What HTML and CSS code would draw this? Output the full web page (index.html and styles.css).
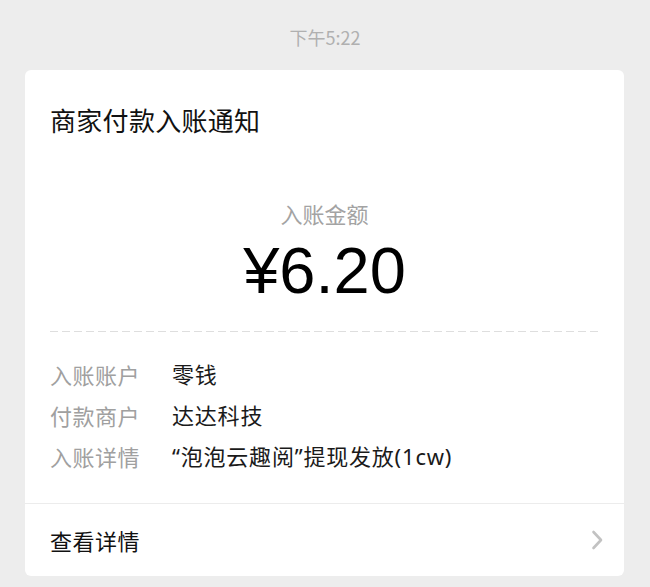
FILE: index.html
```html
<!DOCTYPE html>
<html lang="zh-CN">
<head>
<meta charset="utf-8">
<title>商家付款入账通知</title>
<link rel="stylesheet" href="styles.css">
</head>
<body>
<div class="time">下午5:22</div>
<div class="card">
  <div class="body">
    <div class="title">商家付款入账通知</div>
    <div class="amount-label">入账金额</div>
    <div class="amount">¥6.20</div>
    <div class="dash"></div>
    <div class="rows">
      <div class="row"><span class="label">入账账户</span><span class="value">零钱</span></div>
      <div class="row"><span class="label">付款商户</span><span class="value">达达科技</span></div>
      <div class="row"><span class="label">入账详情</span><span class="value">“泡泡云趣阅”提现发放(1cw)</span></div>
    </div>
  </div>
  <div class="footer">
    <span class="footer-text">查看详情</span>
    <svg class="chev" width="12" height="20" viewBox="0 0 12 20"><path d="M2.5 2 L10 10 L2.5 18" fill="none" stroke="#c2c2c2" stroke-width="2.6" stroke-linecap="round" stroke-linejoin="round"/></svg>
  </div>
</div>
</body>
</html>
```

FILE: styles.css
```css
* { box-sizing: border-box; }
html, body { margin: 0; padding: 0; }
body {
  background: #ededed;
  font-family: "Noto Sans CJK SC", "Noto Sans", sans-serif;
  width: 650px;
  height: 587px;
  overflow: hidden;
}
.time {
  height: 70px;
  padding-top: 24px;
  line-height: 26px;
  text-align: center;
  font-size: 18px;
  color: #b0b0b0;
}
.card {
  margin: 0 26px 0 25px;
  background: #fff;
  border-radius: 6px;
}
.body {
  padding: 32px 25px 0 25px;
}
.title {
  font-size: 26px;
  line-height: 36px;
  color: #111;
  letter-spacing: 0.3px;
}
.amount-label {
  margin-top: 60px;
  text-align: center;
  font-size: 22px;
  line-height: 30px;
  color: #a3a3a3;
}
.amount {
  margin-top: 8px;
  text-align: center;
  font-family: "Liberation Sans", Arial, sans-serif;
  font-size: 65px;
  line-height: 70px;
  color: #000;
}
.dash {
  margin-top: 25px;
  height: 1px;
  background: repeating-linear-gradient(to right, #dedede 0 8px, transparent 8px 12px);
}
.rows {
  padding: 22px 0 26px 0;
}
.row {
  display: flex;
  font-size: 22px;
  line-height: 41px;
}
.label {
  width: 122px;
  color: #a0a0a0;
  letter-spacing: 0.5px;
}
.value {
  color: #1a1a1a;
  font-family: "Noto Sans", "Noto Sans CJK SC", sans-serif;
  letter-spacing: 0.8px;
}
.footer {
  border-top: 1px solid #ececec;
  height: 73px;
  padding: 0 21px 0 25px;
  display: flex;
  align-items: center;
  justify-content: space-between;
}
.footer-text {
  font-size: 22px;
  color: #111;
  letter-spacing: 0.5px;
}
.chev { display: block; }
```
